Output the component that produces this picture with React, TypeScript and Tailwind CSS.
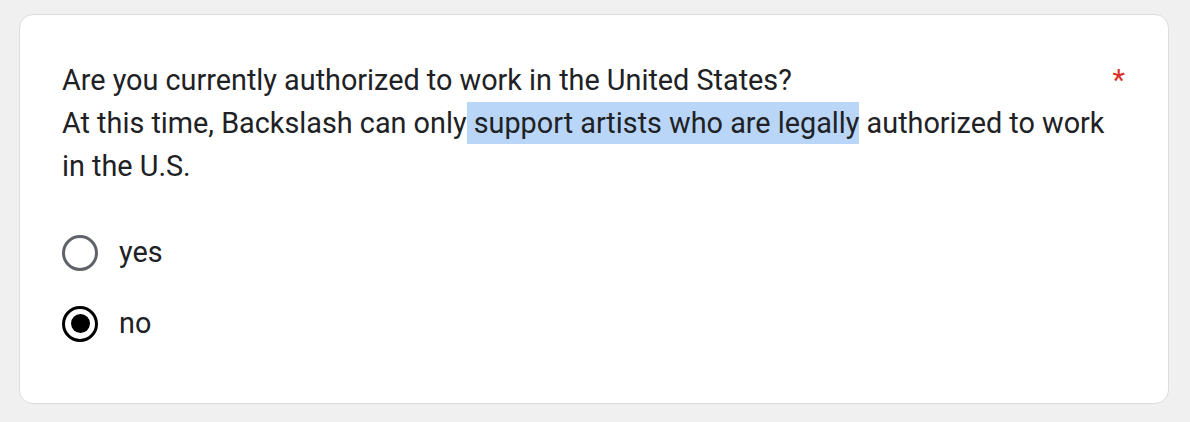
import { useState } from 'react'

const options = ['yes', 'no']

export default function App() {
  const [picked, setPicked] = useState('no')

  return (
    <div className="min-h-[422px] bg-[#f0f0f0] pl-[19px] pr-[21px] pt-[14px] pb-[18px] font-['Roboto',sans-serif] text-[#202124]">
      <div className="rounded-[14px] border border-[#dadce0] bg-white pl-[42px] pr-[43px] pt-[44px] pb-[55px]">
        {/* Question header */}
        <div className="flex items-start justify-between text-[28.8px] leading-[43.2px]">
          <span>Are you currently authorized to work in the United States?</span>
          <span className="text-[#d93025]">*</span>
        </div>
        <p className="text-[28.8px] leading-[43.2px]">
          At this time, Backslash can only
          <span className="bg-[#b9d6f8] py-[4px]"> support artists who are legally</span> authorized
          to work in the U.S.
        </p>

        {/* Options */}
        <div className="mt-[40px] flex flex-col gap-[23px]">
          {options.map((opt) => {
            const on = picked === opt
            return (
              <label key={opt} className="flex h-[48px] cursor-pointer items-center gap-[21px]">
                <input
                  type="radio"
                  name="auth"
                  className="sr-only"
                  checked={on}
                  onChange={() => setPicked(opt)}
                />
                <span
                  className={
                    on
                      ? 'flex h-[36px] w-[36px] items-center justify-center rounded-full border-[3.5px] border-black'
                      : 'flex h-[36px] w-[36px] items-center justify-center rounded-full border-[3px] border-[#5f6368]'
                  }
                >
                  {on && <span className="h-[19px] w-[19px] rounded-full bg-black" />}
                </span>
                <span className="text-[28.8px] leading-[43.2px]">{opt}</span>
              </label>
            )
          })}
        </div>
      </div>
    </div>
  )
}
